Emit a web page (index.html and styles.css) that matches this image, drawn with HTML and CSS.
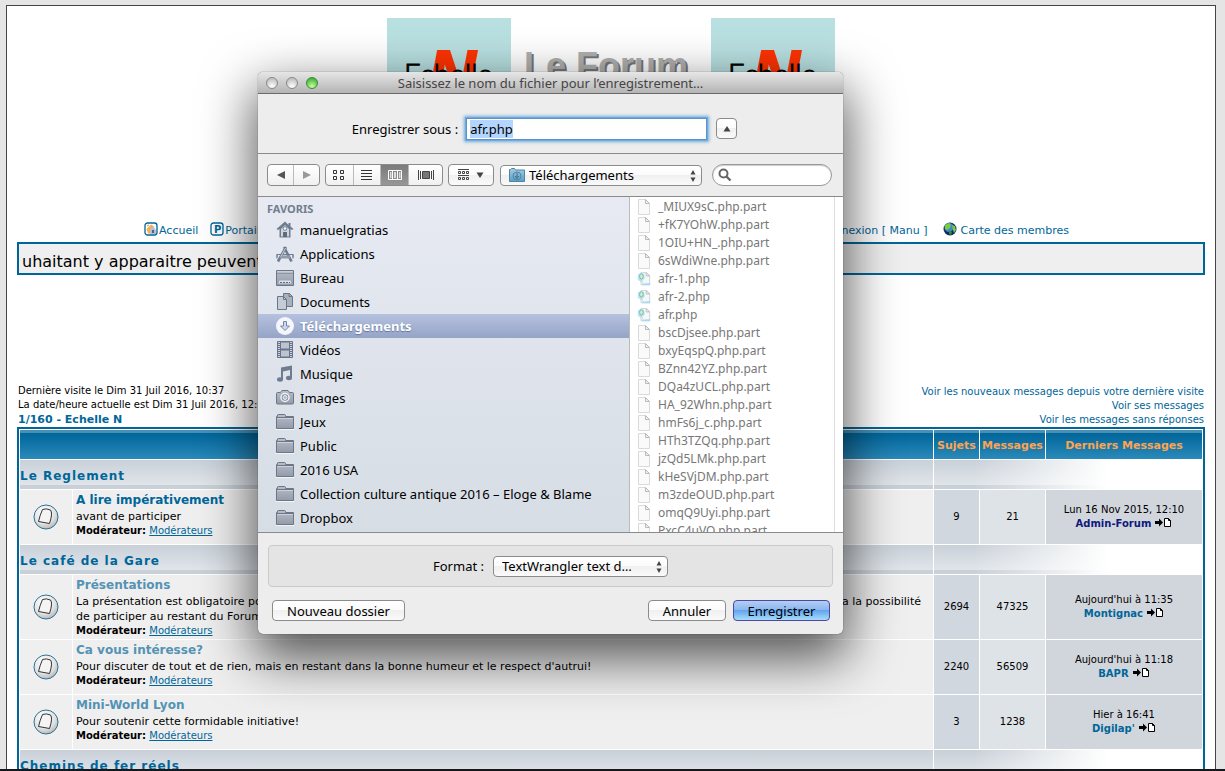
FILE: index.html
```html
<!DOCTYPE html>
<html lang="fr">
<head>
<meta charset="utf-8">
<title>1/160 - Echelle N</title>
<link rel="stylesheet" href="styles.css">
</head>
<body>
<svg class="defs" aria-hidden="true">
  <defs>
    <linearGradient id="gray" x1="0" y1="0" x2="0" y2="1"><stop offset="0" stop-color="#b8bec9"/><stop offset="1" stop-color="#929ba9"/></linearGradient>
    <linearGradient id="blue" x1="0" y1="0" x2="0" y2="1"><stop offset="0" stop-color="#a5cbe0"/><stop offset="1" stop-color="#5f9dc0"/></linearGradient>
    <radialGradient id="disc" cx=".4" cy=".3" r=".8"><stop offset="0" stop-color="#fff"/><stop offset=".6" stop-color="#e2e2e2"/><stop offset="1" stop-color="#aaa"/></radialGradient>
    <symbol id="topic" viewBox="0 0 26 26"><circle cx="13" cy="13" r="12" fill="url(#disc)" stroke="#2b7199"/><path d="M9.500 5.500 Q13 4 17.500 6 Q20 9 16.500 19.500 L5.500 17.500 Q7 11 9.500 5.500Z" fill="#f4f4f4" stroke="#333"/></symbol>
    <symbol id="goto" viewBox="0 0 18 11"><path d="M1 4h4V1.500L9 5.500 5 9.500V7H1z" fill="#000"/><path d="M10.500 1.500h4l2 2v6h-6z" fill="#fff" stroke="#000"/><path d="M14.500 1.500v2h2" fill="none" stroke="#000"/></symbol>
    <symbol id="folder" viewBox="0 0 18 18"><path d="M.5 15.500V3.500h1v-1.500q0-.5 1-.5h6q1 0 1 1v1h8v12z" fill="url(#gray)" stroke="#6c7686"/><path d="M1 4.500h16" stroke="#6c7686"/><path d="M1 5.500h16" stroke="#ccd1da"/><path d="M0 16.500h18" stroke="#fff" opacity=".7"/></symbol>
    <symbol id="doc" viewBox="0 0 14 16"><path d="M1.500.500h7l4 4v11h-11z" fill="#fafafa" stroke="#dadada"/><path d="M8.500 .500v4h4z" fill="#eee" stroke="#bbb"/></symbol>
    <symbol id="php" viewBox="0 0 16 16"><path d="M4.500.500h6l4 4v10h-10z" fill="#f7f7f7" stroke="#d0d0d0"/><path d="M10.500.500v4h4z" fill="#eee" stroke="#bbb"/><path d="M1 3q3-3 7-1l1 5-4 4-4-2z" fill="#b9e2ed"/><ellipse cx="5" cy="5" rx="2" ry="3" fill="#dff0b4" stroke="#55b6d6"/><path d="M4 8l3 5" stroke="#c9cfd2"/><path d="M6 13.500l9-1V15H6z" fill="#a4dcf3"/></symbol>
    <symbol id="updown" viewBox="0 0 6 12"><path d="M3 0l2.500 4.500h-5zM3 12l2.500-4.500h-5z" fill="#444"/></symbol>
  </defs>
</svg>

<div class="viewport">
  <main class="page">
    <header class="banner">
      <svg class="logo" viewBox="0 0 124 160" role="img" aria-label="Echelle N"><rect width="124" height="160" fill="#b9e0e1"/><text class="logo-n" x="41" y="79">N</text><text class="logo-word" x="17" y="67">Echelle</text></svg>
      <h1 class="forum-name">Le Forum</h1>
      <svg class="logo" viewBox="0 0 124 160" role="img" aria-label="Echelle N"><rect width="124" height="160" fill="#b9e0e1"/><text class="logo-n" x="41" y="79">N</text><text class="logo-word" x="17" y="67">Echelle</text></svg>
    </header>

    <nav class="menu">
      <div class="menu-group">
        <a href="#"><svg class="nav-icon" viewBox="0 0 14 14"><rect x="1" y="1" width="12" height="12" rx="2.500" fill="#fff" stroke="#006699" stroke-width="1.300"/><path d="M2.500 7L7 2.500l3 2v7H4z" fill="#f5b14e"/><path d="M6 7l3-3 3 4v4H6z" fill="#b9bed0"/><path d="M8 8h2v3H8z" fill="#555f8a"/><path d="M3 4l2-1" stroke="#e88b1c"/></svg>Accueil</a>
        <a href="#"><svg class="nav-icon" viewBox="0 0 14 14"><rect x="1" y="1" width="12" height="12" rx="2.500" fill="#fff" stroke="#006699" stroke-width="1.300"/><text class="nav-p" x="4" y="10.500">P</text></svg>Portail</a>
      </div>
      <div class="menu-group right">
        <a href="#">Déconnexion [ Manu ]</a>
        <a href="#" class="globe-link"><svg class="nav-icon" viewBox="0 0 14 14"><circle cx="7" cy="7" r="6.500" fill="#0d2c66"/><circle cx="6" cy="5.500" r="4.500" fill="#3f86cf"/><path d="M2 3l4-2 2 2-1 3-3 2-2-1zM9 3l3 1 1 4-2 3-1-3z" fill="#7ccb3a"/><path d="M6 9l3 1-1 3-2-1z" fill="#3c8a2c"/></svg>Carte des membres</a>
      </div>
    </nav>

    <div class="ticker">uhaitant y apparaitre peuvent</div>

    <section class="status">
      <div class="visit">
        <div>Dernière visite le Dim 31 Juil 2016, 10:37</div>
        <div>La date/heure actuelle est Dim 31 Juil 2016, 12:07</div>
        <a class="index-link" href="#">1/160 - Echelle N</a>
      </div>
      <div class="searches">
        <a href="#">Voir les nouveaux messages depuis votre dernière visite</a>
        <a href="#">Voir ses messages</a>
        <a href="#">Voir les messages sans réponses</a>
      </div>
    </section>

    <table class="forums">
      <colgroup><col class="c-icon"><col><col class="c-topics"><col class="c-posts"><col class="c-last"></colgroup>
      <thead>
        <tr><th colspan="2"></th><th>Sujets</th><th>Messages</th><th>Derniers Messages</th></tr>
      </thead>
      <tbody>
        <tr class="cat"><td colspan="2"><a href="#">Le Reglement</a></td><td colspan="3" class="fade"></td></tr>
        <tr class="forum">
          <td class="icon"><svg><use href="#topic"/></svg></td>
          <td class="desc"><a class="title strong" href="#">A lire impérativement</a><p>avant de participer</p><div class="mod"><b>Modérateur:</b> <a href="#">Modérateurs</a></div></td>
          <td class="num">9</td><td class="num light">21</td>
          <td class="last">Lun 16 Nov 2015, 12:10<br><a class="admin" href="#">Admin-Forum</a> <svg><use href="#goto"/></svg></td>
        </tr>
        <tr class="cat"><td colspan="2"><a href="#">Le café de la Gare</a></td><td colspan="3" class="fade"></td></tr>
        <tr class="forum tall">
          <td class="icon"><svg><use href="#topic"/></svg></td>
          <td class="desc"><a class="title" href="#">Présentations</a><p class="split"><span>La présentation est obligatoire pour</span><span>aura la possibilité</span></p><p>de participer au restant du Forum</p><div class="mod"><b>Modérateur:</b> <a href="#">Modérateurs</a></div></td>
          <td class="num">2694</td><td class="num light">47325</td>
          <td class="last">Aujourd'hui à 11:35<br><a href="#">Montignac</a> <svg><use href="#goto"/></svg></td>
        </tr>
        <tr class="forum">
          <td class="icon"><svg><use href="#topic"/></svg></td>
          <td class="desc"><a class="title" href="#">Ca vous intéresse?</a><p>Pour discuter de tout et de rien, mais en restant dans la bonne humeur et le respect d'autrui!</p><div class="mod"><b>Modérateur:</b> <a href="#">Modérateurs</a></div></td>
          <td class="num">2240</td><td class="num light">56509</td>
          <td class="last">Aujourd'hui à 11:18<br><a href="#">BAPR</a> <svg><use href="#goto"/></svg></td>
        </tr>
        <tr class="forum">
          <td class="icon"><svg><use href="#topic"/></svg></td>
          <td class="desc"><a class="title" href="#">Mini-World Lyon</a><p>Pour soutenir cette formidable initiative!</p><div class="mod"><b>Modérateur:</b> <a href="#">Modérateurs</a></div></td>
          <td class="num">3</td><td class="num light">1238</td>
          <td class="last">Hier à 16:41<br><a href="#">Digilap'</a> <svg><use href="#goto"/></svg></td>
        </tr>
        <tr class="cat"><td colspan="2"><a href="#">Chemins de fer réels</a></td><td colspan="3" class="fade"></td></tr>
      </tbody>
    </table>
  </main>
</div>
<div class="screen-edge"></div>

<form class="dialog" role="dialog" aria-labelledby="dialog-title">
  <div class="titlebar">
    <span class="lights"><i></i><i></i><i class="green"></i></span>
    <h2 id="dialog-title">Saisissez le nom du fichier pour l’enregistrement…</h2>
  </div>

  <div class="name-row">
    <label for="filename">Enregistrer sous :</label>
    <input id="filename" type="text" value="afr.php">
    <button type="button" class="btn toggle" aria-label="Réduire"><svg viewBox="0 0 8 6"><path d="M4 0l3.500 5.500h-7z" fill="#444"/></svg></button>
  </div>

  <div class="toolbar">
    <div class="segmented history">
      <button type="button" aria-label="Précédent"><svg viewBox="0 0 10 10"><path d="M9 1v8L1 5z" fill="#555"/></svg></button>
      <button type="button" aria-label="Suivant"><svg viewBox="0 0 10 10"><path d="M1 1v8l8-4z" fill="#999"/></svg></button>
    </div>
    <div class="segmented views">
      <button type="button" aria-label="Icônes"><svg viewBox="0 0 14 12"><path d="M1.500 1.500h3v3h-3zM8.500 1.500h3v3h-3zM1.500 7.500h3v3h-3zM8.500 7.500h3v3h-3z" fill="none" stroke="#333"/></svg></button>
      <button type="button" aria-label="Liste"><svg viewBox="0 0 14 12"><path d="M1 1.500h11M1 4.500h11M1 7.500h11M1 10.500h11" stroke="#333"/></svg></button>
      <button type="button" class="on" aria-label="Colonnes"><svg viewBox="0 0 14 12"><path d="M.5 1.500h13v9H.500zM4.500 2v8M9.500 2v8" fill="none" stroke="#fff"/><path d="M2 3h1.500v6H2zM6 3h2v6H6zM11 3h1.500v6H11z" fill="#ddd"/></svg></button>
      <button type="button" class="wide" aria-label="Cover Flow"><svg class="flow" viewBox="0 0 16 12"><path d="M.5 1v10M2.500 2v8M13.500 2v8M15.500 1v10" stroke="#444"/><path d="M4.500 2.500h7v7h-7z" fill="#777" stroke="#444"/></svg></button>
    </div>
    <button type="button" class="btn group" aria-label="Grouper"><svg class="grid" viewBox="0 0 12 12"><path d="M.5 2.500h2v2h-2zM4.500 2.500h2v2h-2zM8.500 2.500h2v2h-2zM.5 8.500h2v2h-2zM4.500 8.500h2v2h-2zM8.500 8.500h2v2h-2zM0 .500h11M0 6.500h11" fill="none" stroke="#444"/></svg><svg class="caret" viewBox="0 0 8 6"><path d="M.5.500h7L4 6z" fill="#444"/></svg></button>
    <div class="popup place">
      <svg class="popup-icon" viewBox="0 0 16 14"><path d="M.5 13.500v-12h1l1-1h3l1 1.500h9v11.500z" fill="url(#blue)" stroke="#4a86a8"/><circle cx="8" cy="8" r="4" fill="none" stroke="#4a86a8"/><path d="M8 5v4M6 8l2 2.500L10 8" stroke="#326d8f" fill="none"/></svg>
      <select aria-label="Emplacement"><option>Téléchargements</option></select>
      <svg class="arrows"><use href="#updown"/></svg>
    </div>
    <div class="search">
      <svg viewBox="0 0 14 14"><circle cx="5.500" cy="5.500" r="4" fill="none" stroke="#666" stroke-width="2"/><path d="M8.500 8.500l4 4" stroke="#666" stroke-width="2.400"/></svg>
      <input type="search" aria-label="Rechercher">
    </div>
  </div>

  <div class="browser">
    <div class="sidebar">
      <h3>FAVORIS</h3>
      <ul>
        <li><svg viewBox="0 0 18 18"><path d="M9 .500L.500 8l1.500 1 1.500-1v8.500h11V8L16 9l1.500-1L14.500 5.500V2h-2v2z" fill="#6f7c8f"/><path d="M5 8l4-4 4 4v7.500H5z" fill="#cfd6e0"/><circle cx="9" cy="7.500" r="1.800" fill="#fff" stroke="#6f7c8f"/><path d="M7 11h4v5H7z" fill="#5e6b7e"/></svg>manuelgratias</li>
        <li><svg viewBox="0 0 18 18"><path d="M1 12.500V9.500h16v3M1 9v4.500M17 9v4.500" stroke="#6f7c8f" fill="none"/><path d="M2 16.500L10 2M8 2l7.500 14.500" stroke="#6f7c8f" stroke-width="2.600"/><path d="M4 12h10" stroke="#8f9bab" stroke-width="3"/><path d="M5 11.500L9.500 3" stroke="#c3cbd6"/></svg>Applications</li>
        <li><svg viewBox="0 0 18 18"><path d="M.5 1.500h17v15H.500z" fill="url(#gray)" stroke="#6c7686"/><path d="M1 4h16" stroke="#6c7686"/><path d="M1 3h16" stroke="#dde2ea"/><path d="M2.500 14.500l1-3h11l1 3z" fill="#dde2ea"/><path d="M4 13.500h10" stroke="#5f6a7a" stroke-dasharray="2 1"/></svg>Bureau</li>
        <li><svg viewBox="0 0 18 18"><path d="M7.500.500h6l3 3v10h-9z" fill="#a9b1bd" stroke="#6c7686"/><path d="M1.500 3.500h6l3 3v10h-9z" fill="#c6ccd6" stroke="#6c7686"/><path d="M7.500 3.500v3h3M13 .500v3h3" fill="none" stroke="#6c7686"/></svg>Documents</li>
        <li class="selected"><svg viewBox="0 0 18 18"><circle cx="9" cy="9" r="9" fill="#f4f6fa"/><path d="M7.500 4.500h3v4.500h3L9 13.500 4.500 9h3z" fill="#cfd7e8" stroke="#7787ab"/></svg>Téléchargements</li>
        <li><svg viewBox="0 0 18 18"><path d="M1.500.500h15v16h-15z" fill="#69748a" stroke="#69748a"/><path d="M5 1.500h8v6H5zM5 9.500h8v6H5z" fill="#bcc4d0"/><path d="M3 1v16M15 1v16" stroke="#eef1f6" stroke-width="1.500" stroke-dasharray="1 1"/></svg>Vidéos</li>
        <li><svg viewBox="0 0 18 18"><path d="M5 2.500L16 .500v13h-2V5L7 6.500V15H5z" fill="#6f7c8f"/><ellipse cx="4" cy="14.500" rx="3" ry="2.200" fill="#6f7c8f"/><ellipse cx="13" cy="13" rx="3" ry="2.200" fill="#6f7c8f"/></svg>Musique</li>
        <li><svg viewBox="0 0 18 18"><path d="M.5 4.500q0-1 1-1h3l1.500-2h6l1.500 2h3q1 0 1 1v9.500q0 1-1 1h-15q-1 0-1-1z" fill="url(#gray)" stroke="#6c7686"/><circle cx="9" cy="8.500" r="4" fill="#7c8797" stroke="#eef1f6" stroke-width="1.500"/><circle cx="9" cy="8.500" r="2" fill="#b4bcc8" stroke="#eef1f6"/></svg>Images</li>
        <li><svg><use href="#folder"/></svg>Jeux</li>
        <li><svg><use href="#folder"/></svg>Public</li>
        <li><svg><use href="#folder"/></svg>2016 USA</li>
        <li><svg><use href="#folder"/></svg>Collection culture antique 2016 – Eloge &amp; Blame</li>
        <li><svg><use href="#folder"/></svg>Dropbox</li>
      </ul>
    </div>
    <ul class="files">
      <li><svg><use href="#doc"/></svg>_MIUX9sC.php.part</li>
      <li><svg><use href="#doc"/></svg>+fK7YOhW.php.part</li>
      <li><svg><use href="#doc"/></svg>1OIU+HN_.php.part</li>
      <li><svg><use href="#doc"/></svg>6sWdiWne.php.part</li>
      <li><svg><use href="#php"/></svg>afr-1.php</li>
      <li><svg><use href="#php"/></svg>afr-2.php</li>
      <li><svg><use href="#php"/></svg>afr.php</li>
      <li><svg><use href="#doc"/></svg>bscDjsee.php.part</li>
      <li><svg><use href="#doc"/></svg>bxyEqspQ.php.part</li>
      <li><svg><use href="#doc"/></svg>BZnn42YZ.php.part</li>
      <li><svg><use href="#doc"/></svg>DQa4zUCL.php.part</li>
      <li><svg><use href="#doc"/></svg>HA_92Whn.php.part</li>
      <li><svg><use href="#doc"/></svg>hmFs6j_c.php.part</li>
      <li><svg><use href="#doc"/></svg>HTh3TZQq.php.part</li>
      <li><svg><use href="#doc"/></svg>jzQd5LMk.php.part</li>
      <li><svg><use href="#doc"/></svg>kHeSVjDM.php.part</li>
      <li><svg><use href="#doc"/></svg>m3zdeOUD.php.part</li>
      <li><svg><use href="#doc"/></svg>omqQ9Uyi.php.part</li>
      <li><svg><use href="#doc"/></svg>PxcC4uVO.php.part</li>
    </ul>
    <div class="gutter"></div>
  </div>

  <div class="footer">
    <div class="format-box">
      <label for="format">Format :</label>
      <div class="popup format">
        <select id="format"><option>TextWrangler text d…</option></select>
        <svg class="arrows"><use href="#updown"/></svg>
      </div>
    </div>
    <div class="actions">
      <button type="button" class="btn new">Nouveau dossier</button>
      <button type="button" class="btn cancel">Annuler</button>
      <button type="submit" class="btn primary">Enregistrer</button>
    </div>
  </div>
</form>
<script src="app.js"></script>
</body>
</html>
```

FILE: app.js
```js
// The proposed file name is ready to be overwritten.
var field = document.getElementById('filename');
field.focus();
field.select();
```

FILE: styles.css
```css
* { box-sizing: border-box; }

body {
  margin: 0;
  height: 100vh;
  display: flex;
  flex-direction: column;
  overflow: hidden;
  background: #e5e5e5;
  color: #000;
  font: 11px/14px "DejaVu Sans", Verdana, sans-serif;
}

h1, h2, h3, p, ul { margin: 0; padding: 0; }
ul { list-style: none; }
a { color: #006699; text-decoration: none; }
button, input, select { font: inherit; color: inherit; margin: 0; }

.defs { position: absolute; width: 0; height: 0; }

.viewport { flex: 1; min-height: 0; overflow: hidden; padding: 5px 9px 0 6px; }
.screen-edge { height: 2px; background: #15171b; }

.page { background: #fff; border: 1px solid #444; padding: 12px 10px; }

/* Banner */
.banner { display: flex; justify-content: center; height: 200px; }
.logo { width: 124px; height: 160px; }
.logo-n { font: italic bold 66px "Liberation Sans", Arial, sans-serif; fill: #ff3300; stroke: #ff3300; stroke-width: 2; }
.logo-word { font: 300 29px Lato, "Liberation Sans", sans-serif; fill: #000; stroke: #000; stroke-width: 1; }
.forum-name {
  width: 200px;
  padding: 26px 0 0 13px;
  font: bold 36px/44px "Liberation Sans", Arial, sans-serif;
  color: #b0b0b0;
  text-shadow: 2px 2px 0 #777;
  white-space: nowrap;
}

/* Menu */
.menu { display: flex; justify-content: space-between; padding: 2px 136px 0 127px; height: 24px; }
.menu-group { display: flex; gap: 12px; }
.menu-group.right { gap: 15px; }
.menu a { display: flex; align-items: center; gap: 1px; }
.menu .globe-link { gap: 4px; }
.nav-icon { width: 14px; height: 14px; margin-bottom: 5px; }
.nav-p { font: bold 10px "DejaVu Sans", sans-serif; fill: #006699; }

.ticker {
  height: 33px;
  border: 2px solid #006699;
  background: #efefef;
  padding: 8px 3px 0;
  font-size: 16px;
  line-height: 20px;
  white-space: nowrap;
  overflow: hidden;
}

.status {
  display: flex;
  justify-content: space-between;
  align-items: flex-end;
  margin-top: 109px;
  padding: 0 1px;
}
.visit { font-size: 10px; }
.index-link { display: block; font-size: 11px; font-weight: bold; line-height: 15px; }
.searches { display: flex; flex-direction: column; align-items: flex-end; font-size: 10px; }

/* Forum table */
.forums {
  width: 100%;
  table-layout: fixed;
  border: 2px solid #006699;
  border-spacing: 1px;
  background: #fff;
}
.forums th, .forums td { padding: 0; }
.c-icon { width: 52px; }
.c-topics { width: 45px; }
.c-posts { width: 65px; }
.c-last { width: 156px; }
.forums th {
  height: 29px;
  padding-top: 2px;
  font-size: 11px;
  color: #ffa34f;
  background: linear-gradient(#4b8fb5 3px, #00659a 3px, #2a8aba);
}
.cat td {
  height: 29px;
  vertical-align: bottom;
  background: linear-gradient(#c9d0d8, #e0e5ea 25px, #c9d0d8 25px);
}
.cat a { display: block; padding-bottom: 6px; font-size: 12px; font-weight: bold; letter-spacing: 1px; }
.cat .fade {
  background:
    linear-gradient(90deg, rgba(255,255,255,0) 15%, #fff 65%),
    linear-gradient(#c9d0d8, #e0e5ea 25px, #c9d0d8 25px);
}
.forum td { height: 54px; background: #efefef; }
.forum.tall td { height: 64px; }
.forum .icon { text-align: center; vertical-align: middle; }
.icon svg { display: block; width: 26px; height: 26px; margin: 0 auto; }
.forum .desc { padding: 2px 3px 0; vertical-align: top; }
.title { display: block; font-size: 12px; font-weight: bold; line-height: 17px; color: #5493b4; }
.title.strong { color: #006699; }
.desc p { line-height: 15px; }
.split { display: flex; justify-content: space-between; padding-right: 9px; }
.mod { font-size: 10px; }
.mod a { text-decoration: underline; }
.forum .num { background: #d1d7df; font-size: 10px; text-align: center; }
.forum .light { background: #dee3e7; }
.forum .last { background: #d1d5dc; font-size: 10px; text-align: center; }
.last a { font-weight: bold; }
.last .admin { color: #101a7c; }
.last svg { width: 18px; height: 11px; vertical-align: -1px; }

/* Save dialog */
.dialog {
  position: absolute;
  left: 258px;
  top: 72px;
  width: 585px;
  border-radius: 5px;
  overflow: hidden;
  background: #ededed;
  font: 13px/18px "Noto Sans", "Open Sans", sans-serif;
  box-shadow: 0 0 1px rgba(0,0,0,.8), 0 20px 52px 4px rgba(0,0,0,.66);
}
.titlebar {
  height: 22px;
  display: grid;
  grid-template-columns: 60px 1fr 60px;
  align-items: center;
  padding: 0 8px;
  background: linear-gradient(#e6e6e6, #b4b4b4);
  border-bottom: 1px solid #6a6a6a;
}
.titlebar h2 { font-size: 13px; font-weight: normal; color: #444; text-align: center; white-space: nowrap; }
.lights { display: flex; gap: 8px; }
.lights i {
  width: 12px;
  height: 12px;
  border-radius: 50%;
  border: 1px solid #888;
  background: radial-gradient(circle at 50% 85%, #fff, #c4c4c4 75%);
}
.lights .green { border-color: #3c8a35; background: radial-gradient(circle at 50% 85%, #c9ff9e, #45b53c 80%); }

.name-row {
  height: 60px;
  display: flex;
  align-items: center;
  justify-content: center;
  padding: 10px 12px 0 0;
  border-bottom: 1px solid #8a8a8a;
}
#filename {
  width: 241px;
  height: 22px;
  margin: 0 9px 0 8px;
  padding: 0 3px;
  border: 1px solid #5a94cc;
  background: #fff;
  outline: none;
  box-shadow: 0 0 0 1px #72aadc, 0 0 3px 2px #72aadc;
}
#filename::selection { background: #b4d5fe; color: #000; }

.btn {
  height: 21px;
  padding: 0;
  border: 1px solid #8b8b8b;
  border-radius: 4px;
  background: linear-gradient(#fff, #fbfbfb 50%, #f0f0f0 50%, #fafafa);
}
.toggle { width: 21px; }
.toggle svg { display: block; width: 8px; height: 6px; margin: 0 auto; }

.toolbar {
  height: 43px;
  display: flex;
  align-items: center;
  padding: 0 11px 0 9px;
  border-bottom: 1px solid #8a8a8a;
}
.segmented {
  flex: none;
  display: flex;
  height: 22px;
  border: 1px solid #8b8b8b;
  border-radius: 4px;
  overflow: hidden;
  background: linear-gradient(#fff, #f0f0f0);
}
.segmented button {
  flex: 1;
  display: flex;
  align-items: center;
  justify-content: center;
  padding: 0;
  border: 0;
  border-right: 1px solid #bbb;
  background: none;
}
.segmented button:last-child { border-right: 0; }
.segmented .on { background: linear-gradient(#7b7b7b, #979797); }
.history { width: 53px; margin-right: 5px; }
.history svg { width: 10px; height: 10px; }
.views { width: 118px; margin-right: 5px; }
.views svg { width: 14px; height: 12px; }
.views .flow { width: 16px; }
.views .wide { flex: 0 0 33px; }
.group { flex: none; width: 46px; height: 22px; margin-right: 6px; display: flex; align-items: center; justify-content: center; gap: 6px; }
.group .grid { width: 12px; height: 12px; }
.group .caret { width: 8px; height: 6px; }

.popup { position: relative; height: 21px; flex: none; }
.popup select {
  appearance: none;
  width: 100%;
  height: 21px;
  padding: 0 20px 0 8px;
  border: 1px solid #8b8b8b;
  border-radius: 4px;
  background: linear-gradient(#fff, #fbfbfb 50%, #f0f0f0 50%, #fafafa);
  line-height: 18px;
}
.place { width: 202px; margin-right: 10px; }
.place select { padding-left: 28px; }
.popup-icon { position: absolute; left: 9px; top: 3px; width: 16px; height: 14px; }
.arrows { position: absolute; right: 6px; top: 5px; width: 6px; height: 12px; }

.search {
  flex: 1;
  min-width: 0;
  height: 22px;
  display: flex;
  align-items: center;
  padding: 0 6px 0 5px;
  border: 1px solid #999;
  border-radius: 11px;
  background: #fff;
  box-shadow: inset 0 1px 1px #ccc;
}
.search svg { flex: none; width: 14px; height: 14px; }
.search input { flex: 1; width: 0; min-width: 0; border: 0; outline: 0; background: none; }

.browser { display: flex; height: 336px; overflow: hidden; background: #fff; border-bottom: 1px solid #8a8a8a; }
.sidebar {
  width: 372px;
  padding-top: 3px;
  border-right: 1px solid #bbb;
  background: linear-gradient(#e7eaf2, #d6dde5);
}
.sidebar h3 { padding-left: 9px; font-size: 11px; line-height: 18px; color: #717e8f; }
.sidebar li { display: flex; align-items: center; gap: 6px; height: 24px; padding-left: 18px; white-space: nowrap; }
.sidebar svg { width: 18px; height: 18px; }
.sidebar .selected {
  color: #fff;
  font-weight: bold;
  background: linear-gradient(#b5c1de, #95a4c7);
  text-shadow: 0 1px 1px #66759c;
}
.files { flex: 1; padding-top: 1px; color: #777; }
.files li { display: flex; align-items: center; height: 18px; padding-left: 7px; gap: 7px; font-size: 12px; }
.files svg { width: 14px; height: 16px; }
.gutter { width: 9px; border-left: 1px solid #ddd; }

.footer { padding: 12px 10px 13px; }
.format-box {
  height: 42px;
  display: flex;
  align-items: center;
  justify-content: center;
  gap: 9px;
  border: 1px solid #cacaca;
  border-radius: 4px;
  background: #e4e4e4;
}
.format { width: 175px; }
.actions { display: flex; padding: 13px 3px 0 4px; }
.new { width: 133px; margin-right: auto; }
.cancel { width: 78px; margin-right: 7px; }
.primary { width: 97px; border-color: #4c4a9e; background: linear-gradient(#b5cdf3, #86b5f1 50%, #62a5ee 50%, #a9dcfb); }
```
